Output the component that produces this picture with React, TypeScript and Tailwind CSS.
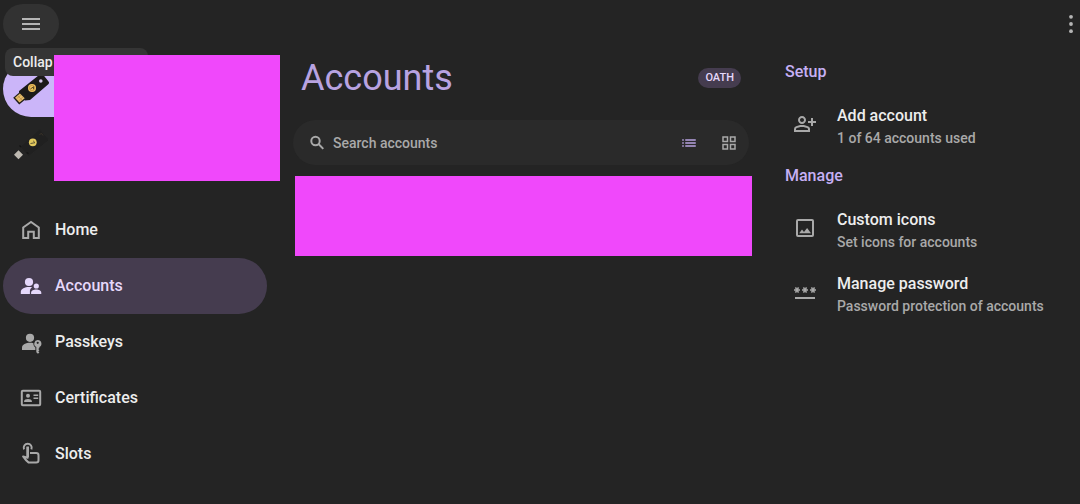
import type { ReactNode } from "react";
import { MdMenu, MdList, MdOutlineGridView, MdOutlinePersonAddAlt, MdPassword } from "react-icons/md";

function HomeIcon() {
  return (
    <svg viewBox="0 0 24 24" className="size-6" fill="none" stroke="currentColor" strokeWidth="2" aria-hidden="true">
      <path d="M4.2 20V9.500L12 4l7.800 5.500V20h-5v-6.200H9.200V20z" />
    </svg>
  );
}

function AccountsIcon() {
  return (
    <svg viewBox="0 0 24 24" className="size-6" fill="currentColor" aria-hidden="true">
      <circle cx="10" cy="8" r="4.1" />
      <path d="M1.8 20v-2.2c0-3.2 4.2-4.9 8.2-4.9 1.1 0 2.2.1 3.2.4-1.5.9-2.3 2.2-2.3 3.8V20z" />
      <circle cx="17.3" cy="12" r="2.6" />
      <path d="M12.1 20v-1.3c0-2 2.6-3.1 5.1-3.1s5.1 1.1 5.1 3.1V20z" />
    </svg>
  );
}

function PasskeysIcon() {
  return (
    <svg viewBox="0 0 24 24" className="size-6" fill="currentColor" aria-hidden="true">
      <circle cx="11" cy="7.8" r="4.1" />
      <path d="M3 20v-2.2c0-3.2 4-5 8-5 1.2 0 2.300.1 3.400.4-.1 2 .7 3.500 2 4.300V20z" />
      <path
        fillRule="evenodd"
        d="M18.7 10a3.700 3.700 0 0 1 1.700 7v.9l-1.100 1.200 1.100 1.200-1.100 1.200 1.100 1-1.500 1.300-1.600-1.500V17a3.700 3.700 0 0 1 1.400-7zm0 1.700a1.100 1.100 0 1 0 0 2.200 1.100 1.100 0 0 0 0-2.200z"
      />
    </svg>
  );
}

function CertificatesIcon() {
  return (
    <svg viewBox="0 0 24 24" className="size-6" fill="currentColor" aria-hidden="true">
      <rect x="2.800" y="4.800" width="18.400" height="14.400" rx="1" fill="none" stroke="currentColor" strokeWidth="2" />
      <circle cx="9" cy="9.800" r="2" />
      <path d="M5.100 16v-.8c0-1.400 2-2.200 3.900-2.200s3.900.8 3.900 2.200v.8zM14.500 8.500h4.700V10h-4.700zM14.500 11.500h4.700V13h-4.700z" />
    </svg>
  );
}

function SlotsIcon() {
  return (
    <svg
      viewBox="0 0 24 24"
      className="size-6"
      fill="none"
      stroke="currentColor"
      strokeWidth="2"
      strokeLinejoin="round"
      aria-hidden="true"
    >
      <path d="M5 7.300a4 4 0 1 1 7.400 0" />
      <path d="M8.700 5v10.800l-4.600-1.400c1.500 2.200 3.200 4.500 5.600 6.200h7.500a2.300 2.300 0 0 0 2.300-2.300v-5a2.300 2.300 0 0 0-2.300-2.300H11" />
      <path d="M8.700 4.500v10.500" strokeWidth="2.600" />
    </svg>
  );
}

function PictureIcon() {
  return (
    <svg viewBox="0 0 24 24" className="size-6" fill="currentColor" aria-hidden="true">
      <rect x="4" y="4" width="16" height="16" rx="1" fill="none" stroke="currentColor" strokeWidth="2" />
      <path d="M6.200 17.300 9 13.600l2 2.500 3.100-4.200 3.900 5.400z" />
    </svg>
  );
}

function SearchIcon() {
  return (
    <svg viewBox="0 0 18 18" className="size-[18px] shrink-0" fill="none" stroke="currentColor" strokeWidth="2" aria-hidden="true">
      <circle cx="7.500" cy="7" r="4.200" />
      <path d="m10.500 10 4.800 4.900" />
    </svg>
  );
}

function SecurityKey({ dark = false }: { dark?: boolean }) {
  return (
    <svg viewBox="0 0 40 40" className="size-10" aria-hidden="true">
      {dark ? (
        <g>
          <path d="m9 22 18-16.500c1-.9 2-.9 3 0l7 8c.7 1 .7 1.800-.2 2.600L17.500 31.500z" fill="#202020" stroke="#292929" strokeWidth=".5" />
          <path d="m3 29.800 4.500-4.500 4.500 4.500-4.500 4.500z" fill="#bdb8b0" />
          <path d="m8.500 20.500 1.500 1.500M15.500 27.500l2 1" stroke="#141414" strokeWidth="1.200" />
          <path d="m28.500 9.500 2-1 1.500 2" fill="none" stroke="#40372b" strokeWidth=".8" />
          <circle cx="21.800" cy="17.300" r="3.900" fill="#e2c85e" />
          <path d="m19.500 18.500 4.500-.8-1.800-1.800" fill="none" stroke="#5e5735" strokeWidth="1" />
        </g>
      ) : (
        <g>
          <path d="m8 22 21-16.800c1-.8 2-.8 2.800 0L37.500 12.500c.8 1 .8 1.800-.2 2.700L19 31l-5 .4-6-6z" fill="#1c1a19" />
          <path d="m2.200 28.800 6.700-5.700 6.600 6.300-7.300 6.200z" fill="#211e1a" />
          <path d="m4 28.800 4.900-4.200 4.800 4.600-5.200 4.300z" fill="#e7bd69" />
          <path d="m6.800 26.800 4.300 4.300M5.300 29.900l4.500-3.600M7.500 32l4.500-4" stroke="#a57b3b" strokeWidth=".5" />
          <circle cx="21" cy="19" r="4" fill="#efc05c" />
          <circle cx="21" cy="19" r="2.700" fill="none" stroke="#b48a3c" strokeWidth=".6" />
          <path d="m19.400 20 3.300-2.300-.3 2.600" fill="none" stroke="#4e3d1b" strokeWidth=".9" />
          <circle cx="29.800" cy="12" r="1.800" fill="#d2c5e9" />
        </g>
      )}
    </svg>
  );
}

function NavItem({ icon, label, active = false }: { icon: ReactNode; label: string; active?: boolean }) {
  return (
    <a
      href="#"
      aria-current={active ? "page" : undefined}
      className={
        active
          ? "flex h-14 items-center gap-3 rounded-full bg-[#453c4f] pl-4 text-[#e5d8fb]"
          : "flex h-14 items-center gap-3 rounded-full pl-4 text-[#a9a9a9]"
      }
    >
      {icon}
      <span className={active ? "text-[#e5d8fb]" : "text-[#ededed]"}>{label}</span>
    </a>
  );
}

function ActionItem({ icon, title, detail }: { icon: ReactNode; title: string; detail: string }) {
  return (
    <button type="button" className="flex h-16 w-full items-center gap-5 pl-2 text-left text-[#a9a9a9]">
      {icon}
      <span className="flex flex-col pt-1">
        <span className="leading-6 text-[#ededed]">{title}</span>
        <span className="text-sm leading-5">{detail}</span>
      </span>
    </button>
  );
}

export default function App() {
  return (
    <div className="flex min-h-screen flex-col bg-[#242424] font-['Roboto',sans-serif] text-base font-medium">
      <header className="flex h-12 items-center justify-between pl-[3px]">
        <button
          type="button"
          aria-label="Menu"
          className="flex h-10 w-14 items-center justify-center rounded-full bg-[#323232] text-[#b5b5b5]"
        >
          <MdMenu className="size-6" />
        </button>
        <button type="button" aria-label="More" className="flex h-12 w-[18px] items-center justify-center text-[#b5b5b5]">
          <svg viewBox="0 0 4 20" className="h-5 w-1" fill="currentColor" aria-hidden="true">
            <circle cx="2" cy="2.800" r="1.900" />
            <circle cx="2" cy="10" r="1.900" />
            <circle cx="2" cy="17.200" r="1.900" />
          </svg>
        </button>
      </header>

      <div className="flex grow">
        <aside className="relative w-[280px] shrink-0 pt-[13px] pr-[13px] pl-[3px]">
          <button type="button" aria-label="Key 1" className="flex h-14 w-full items-center rounded-full bg-[#cbb5f9] pl-2">
            <SecurityKey />
          </button>
          <button type="button" aria-label="Key 2" className="flex h-14 w-full items-center rounded-full pl-2">
            <SecurityKey dark />
          </button>
          <div
            role="tooltip"
            className="absolute top-0 left-[5px] h-7 w-[143px] rounded-lg bg-[#353535] px-2 text-sm leading-7 text-[#ededed]"
          >
            Collap
          </div>
          <div className="absolute top-[7px] right-0 left-[54px] h-[126px] bg-[#f048fb]" />

          <nav className="mt-[29px]">
            <NavItem icon={<HomeIcon />} label="Home" />
            <NavItem icon={<AccountsIcon />} label="Accounts" active />
            <NavItem icon={<PasskeysIcon />} label="Passkeys" />
            <NavItem icon={<CertificatesIcon />} label="Certificates" />
            <NavItem icon={<SlotsIcon />} label="Slots" />
          </nav>
        </aside>

        <main className="min-w-0 grow pt-2 pl-[13px]">
          <div className="flex h-11 items-center justify-between pr-[11px] pl-2">
            <h1 className="text-4xl leading-10 font-normal text-[#b8a3e1]">Accounts</h1>
            <span className="rounded-full bg-[#453c4f] px-[7px] text-[11px] leading-5 text-[#e5d8fb]">OATH</span>
          </div>
          <div className="mt-5 mr-[3px] flex h-[45px] items-center rounded-full bg-[#2a2a2a] pr-[10px] pl-[15px] text-[#a9a9a9]">
            <SearchIcon />
            <input
              type="text"
              aria-label="Search accounts"
              placeholder="Search accounts"
              className="ml-[7px] h-8 min-w-0 grow bg-transparent text-sm outline-none placeholder:text-[#a9a9a9]"
            />
            <button type="button" aria-label="List" className="flex size-5 shrink-0 items-center justify-center text-[#b8a3e1]">
              <MdList className="size-[18px]" />
            </button>
            <button type="button" aria-label="Grid" className="ml-5 flex size-5 shrink-0 items-center justify-center">
              <MdOutlineGridView className="size-[18px]" />
            </button>
          </div>
          <div className="mt-[11px] ml-[2px] h-20 bg-[#f048fb]" />
        </main>

        <aside className="w-[328px] shrink-0 pt-3 pl-[33px]">
          <h2 className="leading-6 text-[#c6b0f5]">Setup</h2>
          <div className="py-2">
            <ActionItem icon={<MdOutlinePersonAddAlt className="size-6" />} title="Add account" detail="1 of 64 accounts used" />
          </div>
          <h2 className="leading-6 text-[#c6b0f5]">Manage</h2>
          <div className="py-2">
            <ActionItem icon={<PictureIcon />} title="Custom icons" detail="Set icons for accounts" />
            <ActionItem icon={<MdPassword className="size-6" />} title="Manage password" detail="Password protection of accounts" />
          </div>
        </aside>
      </div>
    </div>
  );
}
